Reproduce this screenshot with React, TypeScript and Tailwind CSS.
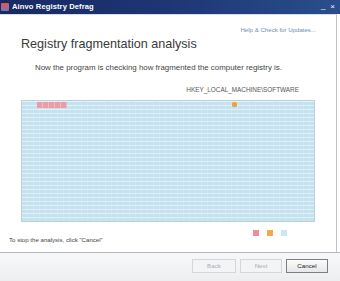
import React from "react";

function Grid() {
  const rows = 30;
  const w = 292;
  const h = 120;
  return (
    <svg width={w} height={h} viewBox={`0 0 ${w} ${h}`} className="block">
      <rect x="0" y="0" width={w} height={h} fill="#e4f2f8" />
      {Array.from({ length: rows }).map((_, i) => (
        <rect key={i} x="0" y={i * 4 + 1} width={w} height="3" fill="#c3e2f0" />
      ))}
      {Array.from({ length: 49 }).map((_, i) => (
        <rect key={"v" + i} x={i * 6 + 5} y="0" width="1" height={h} fill="#d6ecf6" opacity="0.5" />
      ))}
      {[0, 1, 2, 3, 4].map((i) => (
        <rect key={"p" + i} x={15 + i * 6} y="1" width="5.5" height="6" fill="#ef9aa6" />
      ))}
      <rect x="210" y="1" width="5" height="5" rx="1.5" fill="#f2a23c" />
    </svg>
  );
}

export default function App() {
  return (
    <div
      className="w-[340px] h-[281px] flex flex-col bg-white overflow-hidden"
      style={{ fontFamily: '"Liberation Sans", Arial, sans-serif' }}
    >
      <div className="h-[14px] shrink-0 flex items-center bg-gradient-to-r from-[#172a62] via-[#1d3676] to-[#2a4e8d] relative">
        <div className="ml-[1px] w-[8px] h-[8px] bg-gradient-to-b from-[#e05050] to-[#7a6fb0] rounded-[1px]" />
        <span className="ml-[3px] text-[7.6px] font-bold text-white leading-none tracking-[0.1px]">
          Ainvo Registry Defrag
        </span>
        <div className="ml-auto mr-[5px] flex items-center gap-[5px] text-white text-[8px] leading-none">
          <span className="mt-[-2px]">_</span>
          <span>×</span>
        </div>
      </div>
      <div className="flex-1 flex flex-col border-r border-[#bfc4c8] mr-[3px] border-t border-t-[#d8dde2]">
        <div className="flex justify-end pr-[20px] pt-[12px]">
          <span className="text-[6.1px] text-[#6f8db3] leading-none">Help &amp; Check for Updates...</span>
        </div>
        <div className="pl-[21px] pt-[5px] text-[12.6px] text-[#3a3a3a] leading-none">
          Registry fragmentation analysis
        </div>
        <div className="pl-[35px] pt-[13px] text-[7.9px] text-[#444] leading-none">
          Now the program is checking how fragmented the computer registry is.
        </div>
        <div className="flex justify-end pr-[37px] pt-[15px] text-[6.4px] text-[#555] leading-none">
          HKEY_LOCAL_MACHINE\SOFTWARE
        </div>
        <div className="ml-[21px] mt-[7px] w-[294px] border border-[#b9d3da]">
          <Grid />
        </div>
        <div className="flex items-center mt-[8px] ml-[253px] gap-[8px]">
          <div className="w-[6px] h-[6px] bg-[#ef8d9c]" />
          <div className="w-[6px] h-[6px] bg-[#f2a94a]" />
          <div className="w-[6px] h-[6px] bg-[#c9e6f3]" />
        </div>
        <div className="pl-[9px] pt-[1px] text-[6.1px] text-[#444] leading-none">
          To stop the analysis, click "Cancel"
        </div>
      </div>
      <div className="h-[29px] shrink-0 border-t border-[#b4b8bc] bg-gradient-to-b from-[#f7f8f9] to-[#eceef0] flex items-start justify-end pr-[12px] pt-[6px] gap-[4px]">
        <div className="w-[44px] h-[14px] border border-[#d4d7da] bg-[#f3f4f5] flex items-center justify-center text-[6.2px] text-[#a9adb1]">
          Back
        </div>
        <div className="w-[42px] h-[14px] border border-[#d4d7da] bg-[#f3f4f5] flex items-center justify-center text-[6.2px] text-[#a9adb1]">
          Next
        </div>
        <div className="w-[42px] h-[14px] border border-[#7b7f84] bg-gradient-to-b from-[#fbfbfb] to-[#e6e7e8] flex items-center justify-center text-[6.2px] text-[#222]">
          Cancel
        </div>
      </div>
    </div>
  );
}
